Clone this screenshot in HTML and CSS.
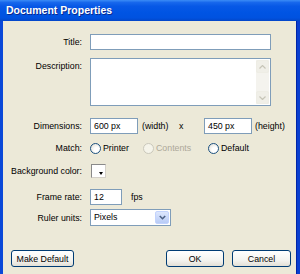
FILE: index.html
```html
<!DOCTYPE html>
<html lang="en">
  <head>
    <meta charset="UTF-8" />
    <title>Document Properties</title>
    <link rel="stylesheet" href="styles.css">
  </head>
  <body>
    <div class="window">
      <div class="titlebar">Document Properties</div>
      <div class="client">
        <div class="row r-title">
          <span class="lbl">Title:</span>
          <div class="field w-title"></div>
        </div>

        <div class="row r-desc">
          <span class="lbl">Description:</span>
          <div class="field area">
            <div class="vscroll">
              <span class="sb-btn">
                <svg width="7" height="4" viewBox="0 0 7 4"><path d="M0.5 3.5 L3.5 0.5 L6.5 3.5" fill="none" stroke="#c7c5b8" stroke-width="1.2"/></svg>
              </span>
              <span class="sb-btn">
                <svg width="7" height="4" viewBox="0 0 7 4"><path d="M0.5 0.5 L3.5 3.5 L6.5 0.5" fill="none" stroke="#c7c5b8" stroke-width="1.2"/></svg>
              </span>
            </div>
          </div>
        </div>

        <div class="row r-dims">
          <span class="lbl">Dimensions:</span>
          <div class="field w-dim">600 px</div>
          <span class="unit u-width">(width)</span>
          <span class="times">x</span>
          <div class="field w-dim">450 px</div>
          <span class="unit u-height">(height)</span>
        </div>

        <div class="row r-match">
          <span class="lbl">Match:</span>
          <span class="opt o-printer"><span class="radio"></span>Printer</span>
          <span class="opt o-contents disabled"><span class="radio"></span>Contents</span>
          <span class="opt"><span class="radio"></span>Default</span>
        </div>

        <div class="row r-bg">
          <span class="lbl">Background color:</span>
          <span class="swatch"><span class="swatch-arrow"></span></span>
        </div>

        <div class="row r-rate">
          <span class="lbl">Frame rate:</span>
          <div class="field w-rate">12</div>
          <span class="unit u-fps">fps</span>
        </div>

        <div class="row r-ruler">
          <span class="lbl">Ruler units:</span>
          <div class="field select">
            <span>Pixels</span>
            <span class="drop">
              <svg width="7" height="5" viewBox="0 0 7 5"><path d="M0.8 1 L3.5 3.7 L6.2 1" fill="none" stroke="#4d6185" stroke-width="1.6"/></svg>
            </span>
          </div>
        </div>

        <div class="buttons">
          <button class="btn b-default">Make Default</button>
          <div class="btn-group">
            <button class="btn b-ok">OK</button>
            <button class="btn b-cancel">Cancel</button>
          </div>
        </div>
      </div>
    </div>
  </body>
</html>
```

FILE: styles.css
```css
/* XP style dialog */
body {
  margin: 0;
  font-family: "Liberation Sans", Arial, sans-serif;
  font-size: 8.8px;
  color: #000;
  background: #ece9d8;
}
.window {
  width: 300px;
  height: 274px;
  overflow: hidden;
  display: flex;
  flex-direction: column;
}
.titlebar {
  height: 21px;
  flex: none;
  box-sizing: border-box;
  padding: 4px 0 0 6px;
  color: #fff;
  font-weight: bold;
  font-size: 10.5px;
  background: linear-gradient(to bottom, #3b8cf6 0%, #1767ec 12%, #0758e6 30%, #0054e3 60%, #0052e0 85%, #0346c8 100%);
  text-shadow: 1px 1px 0 #0a2a8e;
}
.client {
  flex: 1;
  background: #ece9d8;
  border-left: 3px solid #0a48d8;
  border-right: 3px solid #0a3fd0;
  box-shadow: inset -1px 0 0 #0025a8;
  padding-top: 13px;
  display: flex;
  flex-direction: column;
}
.row {
  display: flex;
  align-items: center;
}
.lbl {
  width: 79px;
  flex: none;
  text-align: right;
  margin-right: 8px;
}
.field {
  box-sizing: border-box;
  border: 1px solid #7f9db9;
  background: #fff;
  height: 16px;
  line-height: 14px;
  padding-left: 3px;
}
.r-title {
  height: 16px;
}
.w-title {
  width: 181px;
}
.r-desc {
  margin-top: 8px;
  height: 48px;
  align-items: flex-start;
}
.r-desc .lbl {
  padding-top: 3px;
}
.area {
  width: 181px;
  height: 48px;
  padding: 1px 1px 1px 0;
  display: flex;
  justify-content: flex-end;
}
.vscroll {
  width: 13px;
  background: #f4f3ee;
  display: flex;
  flex-direction: column;
  justify-content: space-between;
}
.sb-btn {
  height: 13px;
  box-sizing: border-box;
  border: 1px solid #eeede5;
  border-radius: 2px;
  background: #f0efe8;
  display: flex;
  align-items: center;
  justify-content: center;
}
.r-dims {
  margin-top: 12px;
  height: 16px;
}
.w-dim {
  width: 48px;
}
.u-width {
  width: 37px;
  margin-left: 4px;
}
.times {
  width: 25px;
}
.u-height {
  margin-left: 3px;
}
.r-match {
  margin-top: 6px;
  height: 16px;
}
.opt {
  display: flex;
  align-items: center;
}
.o-printer {
  width: 53px;
}
.o-contents {
  width: 65px;
}
.radio {
  width: 11px;
  height: 11px;
  box-sizing: border-box;
  border: 1px solid #1c5180;
  border-radius: 50%;
  background: radial-gradient(circle at 65% 65%, #fff 30%, #dcd9cf 100%);
  margin-right: 2px;
}
.disabled {
  color: #aca899;
}
.disabled .radio {
  border-color: #cac8bb;
  background: #f5f4ea;
}
.r-bg {
  margin-top: 7px;
  height: 15px;
}
.r-bg .lbl {
  margin-right: 9px;
}
.swatch {
  position: relative;
  width: 15px;
  height: 14px;
  box-sizing: border-box;
  border: 1px solid #8a8a8a;
  border-right-color: #d4d0c8;
  border-bottom-color: #d4d0c8;
  background: #fff;
}
.swatch-arrow {
  position: absolute;
  right: 2px;
  bottom: 2px;
  border-left: 2.5px solid transparent;
  border-right: 2.5px solid transparent;
  border-top: 3px solid #000;
}
.r-rate {
  margin-top: 11px;
  height: 16px;
}
.w-rate {
  width: 32px;
}
.u-fps {
  margin-left: 9px;
}
.r-ruler {
  margin-top: 4px;
  height: 17px;
}
.select {
  width: 81px;
  height: 17px;
  display: flex;
  justify-content: space-between;
  padding: 1px;
  padding-left: 3px;
  line-height: 13px;
}
.drop {
  width: 14px;
  box-sizing: border-box;
  border: 1px solid #c3d3fd;
  border-radius: 2px;
  background: linear-gradient(to bottom, #dde7fd, #b8cbf6);
  display: flex;
  align-items: center;
  justify-content: center;
}
.buttons {
  margin-top: 24px;
  display: flex;
  justify-content: space-between;
  padding: 0 6px 0 8px;
}
.btn-group {
  display: flex;
  gap: 8px;
}
.btn {
  height: 17px;
  box-sizing: border-box;
  border: 1px solid #003c74;
  border-radius: 3px;
  background: linear-gradient(to bottom, #ffffff 0%, #f4f4f0 60%, #e3e0d6 100%);
  font-family: inherit;
  font-size: 8.8px;
  color: #000;
  padding: 0;
}
.b-default {
  width: 63px;
}
.b-ok {
  width: 58px;
}
.b-cancel {
  width: 59px;
}
```
